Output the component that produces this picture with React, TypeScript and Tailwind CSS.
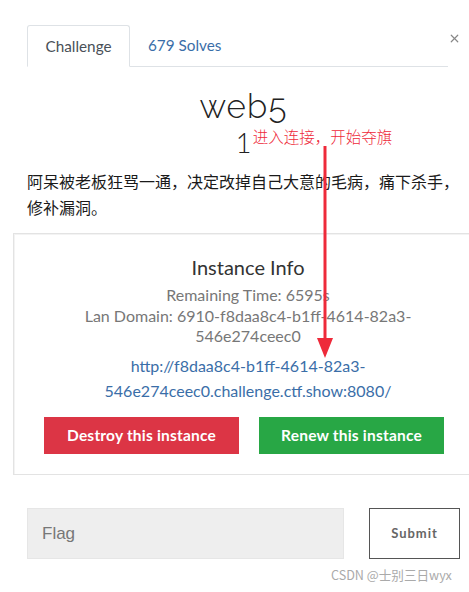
import { X } from "lucide-react";

const LATO = "font-['Lato','Liberation_Sans','Noto_Sans_CJK_SC',sans-serif]";

export default function App() {
  return (
    <div className={`relative h-[592px] w-[469px] overflow-hidden bg-white text-[#212529] ${LATO}`}>
      {/* tabs */}
      <div className="flex items-start pl-[27px] pt-[25px]">
        <div className="flex h-[42px] w-[421px] items-end border-b border-[#dee2e6]">
          <div className="-mb-px flex h-[42px] w-[103px] items-center justify-center rounded-t-[3px] border border-b-white border-[#dee2e6] bg-white text-[15.3px] text-[#495057]">
            Challenge
          </div>
          <div className="flex h-[41px] items-center pl-[18px] text-[15.3px] text-[#3a6ea8]">679 Solves</div>
        </div>
        <div className="flex h-[26px] w-[14px] items-center justify-start text-[#888]">
          <X size={13} strokeWidth={2.2} />
        </div>
      </div>

      {/* title */}
      <div className="mt-[20px] pl-[27px] pr-[9px] text-center">
        <h1 className="font-['Raleway','Lato',sans-serif] text-[33px] font-light leading-[40px] tracking-[1.2px] text-[#222]">web5</h1>
        <div className="mt-[-1px] flex justify-center">
          <div className="relative text-[27px] font-light leading-[34px] text-[#222]">
            1
            <span className="absolute left-[17px] top-[0px] whitespace-nowrap font-['Noto_Sans_CJK_SC',sans-serif] text-[15.5px] leading-[20px] text-[#ee2a3a]">
              进入连接，开始夺旗
            </span>
          </div>
        </div>
      </div>

      {/* description */}
      <p className="mt-[8px] pl-[27px] font-['Noto_Sans_CJK_SC',sans-serif] text-[16px] leading-[26px] text-[#1a1a1a]">
        阿呆被老板狂骂一通，决定改掉自己大意的毛病，痛下杀手，修补漏洞。
      </p>

      {/* instance box */}
      <div className="ml-[13px] mt-[13px] w-[470px] border border-[#e3e3e3] pb-[20px] pt-[20px] text-center shadow-[inset_1px_1px_0_#f3f3f3]">
        <div className="text-[20px] leading-[26px] text-[#333]">Instance Info</div>
        <div className="mt-[5px] text-[16px] leading-[20px] text-[#777]">Remaining Time: 6595s</div>
        <div className="mx-auto mt-[1px] w-[340px] text-[16px] leading-[20px] text-[#777]">
          Lan Domain: 6910-f8daa8c4-b1ff-4614-82a3-546e274ceec0
        </div>
        <div className="mx-auto mt-[7px] w-[300px] text-[16px] leading-[25px] text-[#3a6ea8]">
          http://f8daa8c4-b1ff-4614-82a3-
          <br />
          546e274ceec0.challenge.ctf.show:8080/
        </div>
        <div className="mt-[14px] flex gap-[20px] pl-[30px]">
          <button className="h-[37px] w-[195px] bg-[#dc3545] text-[15.5px] font-bold tracking-[0.2px] text-white">
            Destroy this instance
          </button>
          <button className="h-[37px] w-[185px] bg-[#28a745] text-[15.5px] font-bold tracking-[0.2px] text-white">
            Renew this instance
          </button>
        </div>
      </div>

      {/* flag form */}
      <div className="mt-[33px] flex gap-[25px] pl-[27px]">
        <div className="flex h-[51px] w-[317px] items-center border border-[#e6e6e6] bg-[#eeeeee] pl-[14px] font-['Liberation_Sans',sans-serif] text-[17px] text-[#777]">
          Flag
        </div>
        <button className="h-[51px] w-[91px] border border-[#555] bg-white text-[13px] font-bold tracking-[1px] text-[#666]">
          Submit
        </button>
      </div>

      <div className="mt-[8px] pl-[331px] font-['Noto_Sans_CJK_SC',sans-serif] text-[12.6px] leading-[16px] text-[#aaa]">
        CSDN @士别三日wyx
      </div>

      {/* red annotation arrow */}
      <svg className="absolute left-[314px] top-[146px]" width="22" height="214" viewBox="0 0 22 214">
        <line x1="11" y1="0" x2="11" y2="194" stroke="#ee2a3a" strokeWidth="3" />
        <polygon points="3,192 19,192 11,212" fill="#ee2a3a" />
      </svg>
    </div>
  );
}
